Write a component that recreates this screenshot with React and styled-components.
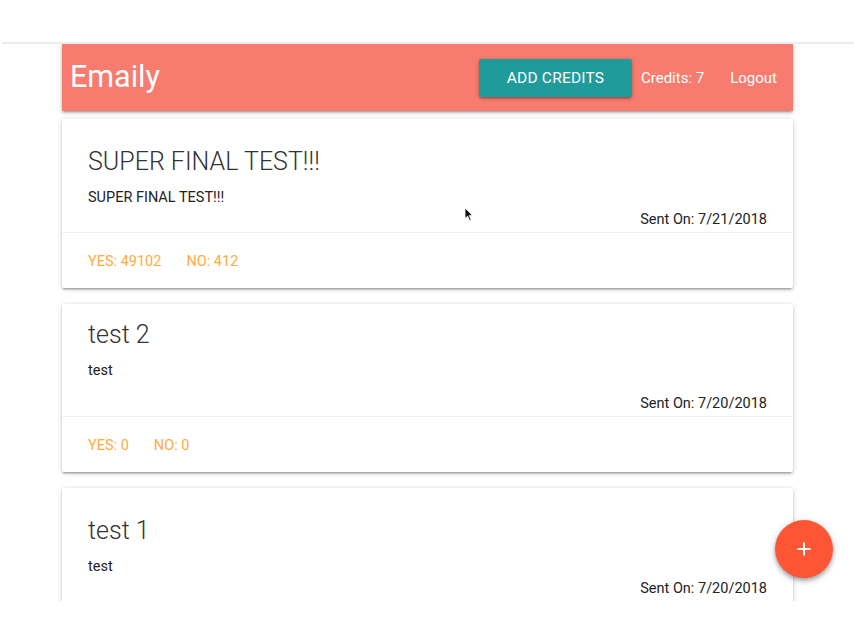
import React from "react";
import styled, { createGlobalStyle } from "styled-components";

const GlobalStyle = createGlobalStyle`
  html, body {
    margin: 0;
    padding: 0;
    background: #ffffff;
  }
  body {
    font-family: Roboto, "Liberation Sans", sans-serif;
    color: rgba(0, 0, 0, 0.87);
  }
  * {
    box-sizing: border-box;
  }
`;

const Page = styled.div`
  position: relative;
  width: 854px;
  height: 642px;
  overflow: hidden;
`;

const TopStrip = styled.div`
  height: 44px;
  margin-left: 2px;
  border-bottom: 2px solid #ececee;
`;

const Viewport = styled.div`
  height: 557px;
  overflow: hidden;
`;

const Container = styled.div`
  width: 731px;
  margin-left: 62px;
`;

const Nav = styled.nav`
  height: 67px;
  background: #f87b70;
  display: flex;
  align-items: center;
  justify-content: space-between;
  padding: 0 16px 0 8px;
  box-shadow: 0 2px 2px 0 rgba(0, 0, 0, 0.14), 0 3px 1px -2px rgba(0, 0, 0, 0.12),
    0 1px 5px 0 rgba(0, 0, 0, 0.2);
  position: relative;
  z-index: 1;
`;

const Brand = styled.a`
  color: #ffffff;
  font-size: 30.5px;
  font-weight: 400;
  line-height: 1;
  margin-top: -1px;
`;

const NavLinks = styled.ul`
  display: flex;
  align-items: center;
  list-style: none;
  margin: 0;
  padding: 0;
`;

const NavItem = styled.li`
  color: #ffffff;
  font-size: 15px;
  padding: 0 ${(p) => p.$right ?? 0}px 0 ${(p) => p.$left ?? 0}px;
`;

const CreditsButton = styled.button`
  height: 38px;
  width: 153px;
  border: none;
  border-radius: 2px;
  background: #1f9b9b;
  color: #ffffff;
  font-family: Roboto, "Liberation Sans", sans-serif;
  font-size: 15.5px;
  font-weight: 400;
  letter-spacing: 0.2px;
  text-transform: uppercase;
  box-shadow: 0 2px 2px 0 rgba(0, 0, 0, 0.14), 0 3px 1px -2px rgba(0, 0, 0, 0.12),
    0 1px 5px 0 rgba(0, 0, 0, 0.2);
`;

const List = styled.div`
  display: flex;
  flex-direction: column;
  gap: 16px;
  padding-top: 8px;
`;

const Card = styled.div`
  background: #ffffff;
  border-radius: 2px;
  box-shadow: 0 2px 2px 0 rgba(0, 0, 0, 0.14), 0 3px 1px -2px rgba(0, 0, 0, 0.12),
    0 1px 5px 0 rgba(0, 0, 0, 0.2);
`;

const CardContent = styled.div`
  padding: ${(p) => p.$top}px 26px ${(p) => p.$bottom}px;
`;

const CardTitle = styled.span`
  display: block;
  font-size: 25px;
  font-weight: 300;
  line-height: 32px;
  color: #333333;
  margin-bottom: 9px;
`;

const Body = styled.p`
  margin: 0;
  font-size: 14.5px;
  line-height: 22px;
  color: #222222;
`;

const SentOn = styled.p`
  margin: ${(p) => p.$gap}px 0 0;
  text-align: right;
  font-size: 14.5px;
  line-height: 22px;
  color: #222222;
`;

const CardAction = styled.div`
  border-top: 1px solid rgba(160, 160, 160, 0.16);
  padding: 18px 26px 15px;
  display: flex;
`;

const Vote = styled.a`
  color: #ffab40;
  font-size: 14.5px;
  line-height: 22px;
  margin-right: 25px;
  text-transform: uppercase;
`;

const Fab = styled.button`
  position: absolute;
  left: 775px;
  top: 520px;
  width: 58px;
  height: 58px;
  border-radius: 50%;
  border: none;
  background: #fe5535;
  display: flex;
  align-items: center;
  justify-content: center;
  box-shadow: 0 4px 5px 0 rgba(0, 0, 0, 0.14), 0 1px 10px 0 rgba(0, 0, 0, 0.12),
    0 2px 4px -1px rgba(0, 0, 0, 0.3);
`;

const Cursor = styled.svg`
  position: absolute;
  left: 464px;
  top: 207px;
`;

const surveys = [
  {
    title: "SUPER FINAL TEST!!!",
    body: "SUPER FINAL TEST!!!",
    date: "7/21/2018",
    yes: 49102,
    no: 412,
    top: 27,
    gap: 0,
    bottom: 1,
  },
  {
    title: "test 2",
    body: "test",
    date: "7/20/2018",
    yes: 0,
    no: 0,
    top: 15,
    gap: 11,
    bottom: 1,
  },
  {
    title: "test 1",
    body: "test",
    date: "7/20/2018",
    top: 27,
    gap: 0,
    bottom: 4,
  },
];

const App = () => {
  return (
    <Page>
      <GlobalStyle />
      <TopStrip />
      <Viewport>
        <Container>
          <Nav>
            <Brand>Emaily</Brand>
            <NavLinks>
              <NavItem>
                <CreditsButton>Add Credits</CreditsButton>
              </NavItem>
              <NavItem $left={9} $right={26}>
                Credits: 7
              </NavItem>
              <NavItem>Logout</NavItem>
            </NavLinks>
          </Nav>
          <List>
            {surveys.map((s) => (
              <Card key={s.title}>
                <CardContent $top={s.top} $bottom={s.bottom}>
                  <CardTitle>{s.title}</CardTitle>
                  <Body>{s.body}</Body>
                  <SentOn $gap={s.gap}>Sent On: {s.date}</SentOn>
                </CardContent>
                {s.yes !== undefined && (
                  <CardAction>
                    <Vote>Yes: {s.yes}</Vote>
                    <Vote>No: {s.no}</Vote>
                  </CardAction>
                )}
              </Card>
            ))}
          </List>
        </Container>
      </Viewport>
      <Fab aria-label="New survey">
        <svg width="16" height="16" viewBox="0 0 16 16">
          <path d="M8 1.5v13M1.5 8h13" stroke="#ffffff" strokeWidth="2" />
        </svg>
      </Fab>
      <Cursor width="10" height="15" viewBox="0 0 10 15">
        <path
          d="M1 1 L1 11.5 L3.6 9.2 L5.6 13.6 L7.2 12.9 L5.3 8.6 L8.6 8.6 Z"
          fill="#111111"
          stroke="#ffffff"
          strokeWidth="0.8"
        />
      </Cursor>
    </Page>
  );
};

export default App;
